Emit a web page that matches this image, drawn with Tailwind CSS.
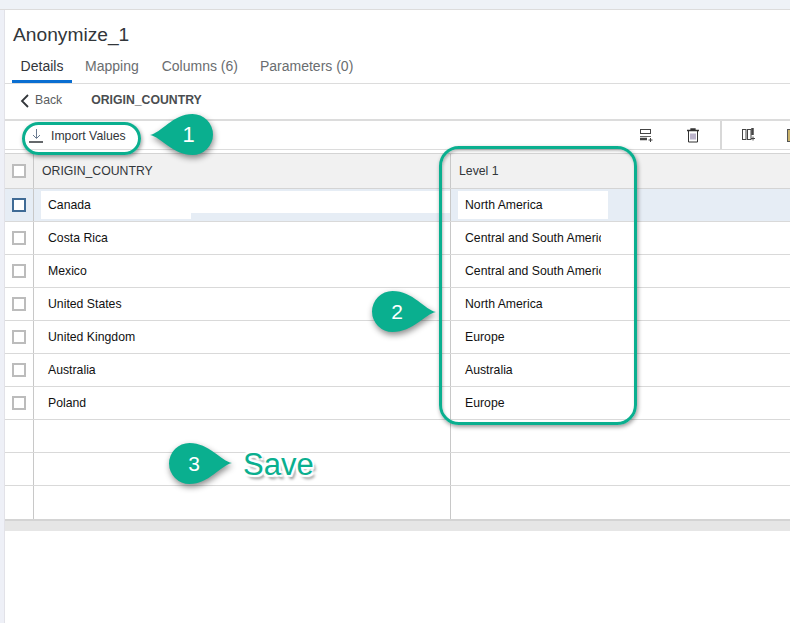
<!DOCTYPE html>
<html lang="en">
<head>
    <meta charset="UTF-8" />
    <title>Anonymize_1</title>
    <script src="https://cdn.jsdelivr.net/npm/@tailwindcss/browser@4"></script>
</head>
<body class="bg-white font-['Liberation_Sans',Arial,sans-serif] overflow-hidden">
<div class="relative w-[790px] h-[623px] overflow-hidden bg-white">

    <!-- Shell top bar -->
    <div class="h-[10px] bg-[#eef2f7] border-b border-[#dcdcdc]"></div>

    <div class="flex h-[613px]">
        <div class="w-[5px] shrink-0 bg-[#eef0f7] border-r border-[#e2e2e8]"></div>

        <div class="flex-1 min-w-0">
            <!-- Title and tabs -->
            <div class="h-[74px] border-b border-[#dcdcdc]">
                <h1 class="pl-2 pt-[13px] h-[44px] text-[19.2px] leading-[24px] text-[#32363a]">Anonymize_1</h1>
                <div class="flex pl-[7px] h-[29px] text-[14px] leading-[18px] text-[#6a6d70]">
                    <div class="w-[60px] pt-[3px] text-center text-[#32363a] border-b-[3px] border-[#0a6ed1] box-content h-[23px]">Details</div>
                    <div class="ml-[13px] pt-[3px]">Mapping</div>
                    <div class="ml-[23px] pt-[3px]">Columns (6)</div>
                    <div class="ml-[22px] pt-[3px]">Parameters (0)</div>
                </div>
            </div>

            <!-- Back row -->
            <div class="flex items-center h-[37px] pb-[2px] border-b-2 border-[#dcdcdc] text-[12.25px] text-[#32363a]">
                <svg class="ml-[15px] w-[9px] h-[14px]" viewBox="0 0 9 14" fill="none" stroke="#32363a" stroke-width="1.8"><path d="M8 1 2 7l6 6"/></svg>
                <span class="ml-[6px] text-[#5a5d60]">Back</span>
                <span class="ml-[29px] font-bold text-[#4a4d50]">ORIGIN_COUNTRY</span>
            </div>

            <!-- Toolbar -->
            <div class="relative flex items-center h-[29px] border-b border-[#dcdcdc] text-[12.25px] text-[#32363a]">
                <svg class="ml-[24px] mt-[1px] w-[15px] h-[14px]" viewBox="0 0 15 14" fill="none" stroke="#32363a"><path d="M7.500 0v9M4 6l3.500 3.500L11 6" stroke="#6a7a90"/><path d="M0 13h14" stroke-width="1.500"/></svg>
                <span class="ml-[7px] mt-[2px]">Import Values</span>
                <div class="ml-auto flex items-center h-full">
                    <svg class="w-[14px] h-[14px] mr-[33px]" viewBox="0 0 14 14" fill="none" stroke="#444"><rect x="1.500" y="1.500" width="10" height="4"/><path d="M1 8.500h11" stroke="#666"/><path d="M1 11h7" stroke-width="2.500"/><path d="M9.500 12h4M11.500 10v4"/></svg>
                    <svg class="w-[14px] h-[15px] mr-[20px]" viewBox="0 0 14 15" fill="none" stroke="#333"><path d="M1 2.500h12M5 2.500V1h4v1.500" stroke-width="1.300"/><path d="M2.500 3v11h9V3"/><path d="M5 5.500v6M7 5.500v6M9 5.500v6" stroke="#7a6a9a"/></svg>
                    <div class="w-[2px] h-full bg-[#d8d8d8] mr-[20px]"></div>
                    <svg class="w-[13px] h-[14px] mr-[32px]" viewBox="0 0 13 14" fill="none" stroke="#444"><rect x="0.500" y="1.500" width="3.500" height="10"/><rect x="5.500" y="1.500" width="3.500" height="10"/><path d="M10.500 0v7" stroke-width="2.500"/><path d="M9 10.500h4M11 8.500v4"/></svg>
                    <div class="w-[5px] h-[13px] mr-[-2px] bg-[#c9b26a] border border-[#555]"></div>
                </div>
            </div>

            <!-- Table -->
            <div class="mt-[3px] border-t border-[#d4d4d4] text-[12.25px] text-[#111]">
                <div class="grid grid-cols-[29px_417px_1fr] h-[35px] bg-[#f1f1f1] border-b border-[#d4d4d4] text-[#32363a] items-center">
                    <div class="flex items-center justify-center h-full border-r border-[#c8c8c8] pr-[1px]"><span class="block size-[14px] border-2 border-[#bcbcbc] bg-white"></span></div>
                    <div class="pl-2 h-full flex items-center border-r border-[#c8c8c8]">ORIGIN_COUNTRY</div>
                    <div class="pl-2">Level 1</div>
                </div>

                <!-- Selected row -->
                <div class="relative grid grid-cols-[29px_417px_1fr] h-[33px] bg-[#e6edf5] border-b border-[#d9d9d9] items-center">
                    <div class="flex items-center justify-center h-full border-r border-[#c8c8c8] pr-[1px]"><span class="block size-[14px] border-2 border-[#3f6b96] bg-white"></span></div>
                    <div class="relative h-full border-r border-[#c8c8c8]">
                        <div class="absolute left-[7px] top-[2px] w-[150px] h-[28px] bg-white pl-[7px] leading-[28px]">Canada</div>
                        <div class="absolute left-[157px] top-[2px] right-0 h-[22px] bg-white"></div>
                    </div>
                    <div class="pl-[7px] h-full pt-[2px]"><div class="w-[150px] h-[28px] bg-white pl-[7px] leading-[28px]">North America</div></div>
                </div>

                <div class="grid grid-cols-[29px_417px_1fr] h-[33px] border-b border-[#d9d9d9] items-center">
                    <div class="flex items-center justify-center h-full border-r border-[#c8c8c8] pr-[1px]"><span class="block size-[14px] border-2 border-[#bcbcbc]"></span></div>
                    <div class="pl-[14px] h-full flex items-center border-r border-[#c8c8c8]">Costa Rica</div>
                    <div class="pl-[14px]"><div class="w-[136px] overflow-hidden whitespace-nowrap">Central and South America</div></div>
                </div>
                <div class="grid grid-cols-[29px_417px_1fr] h-[33px] border-b border-[#d9d9d9] items-center">
                    <div class="flex items-center justify-center h-full border-r border-[#c8c8c8] pr-[1px]"><span class="block size-[14px] border-2 border-[#bcbcbc]"></span></div>
                    <div class="pl-[14px] h-full flex items-center border-r border-[#c8c8c8]">Mexico</div>
                    <div class="pl-[14px]"><div class="w-[136px] overflow-hidden whitespace-nowrap">Central and South America</div></div>
                </div>
                <div class="grid grid-cols-[29px_417px_1fr] h-[33px] border-b border-[#d9d9d9] items-center">
                    <div class="flex items-center justify-center h-full border-r border-[#c8c8c8] pr-[1px]"><span class="block size-[14px] border-2 border-[#bcbcbc]"></span></div>
                    <div class="pl-[14px] h-full flex items-center border-r border-[#c8c8c8]">United States</div>
                    <div class="pl-[14px]">North America</div>
                </div>
                <div class="grid grid-cols-[29px_417px_1fr] h-[33px] border-b border-[#d9d9d9] items-center">
                    <div class="flex items-center justify-center h-full border-r border-[#c8c8c8] pr-[1px]"><span class="block size-[14px] border-2 border-[#bcbcbc]"></span></div>
                    <div class="pl-[14px] h-full flex items-center border-r border-[#c8c8c8]">United Kingdom</div>
                    <div class="pl-[14px]">Europe</div>
                </div>
                <div class="grid grid-cols-[29px_417px_1fr] h-[33px] border-b border-[#d9d9d9] items-center">
                    <div class="flex items-center justify-center h-full border-r border-[#c8c8c8] pr-[1px]"><span class="block size-[14px] border-2 border-[#bcbcbc]"></span></div>
                    <div class="pl-[14px] h-full flex items-center border-r border-[#c8c8c8]">Australia</div>
                    <div class="pl-[14px]">Australia</div>
                </div>
                <div class="grid grid-cols-[29px_417px_1fr] h-[33px] border-b border-[#d9d9d9] items-center">
                    <div class="flex items-center justify-center h-full border-r border-[#c8c8c8] pr-[1px]"><span class="block size-[14px] border-2 border-[#bcbcbc]"></span></div>
                    <div class="pl-[14px] h-full flex items-center border-r border-[#c8c8c8]">Poland</div>
                    <div class="pl-[14px]">Europe</div>
                </div>

                <!-- Empty rows -->
                <div class="grid grid-cols-[29px_417px_1fr] h-[33px] border-b border-[#d9d9d9]">
                    <div class="border-r border-[#c8c8c8]"></div><div class="border-r border-[#c8c8c8]"></div><div></div>
                </div>
                <div class="grid grid-cols-[29px_417px_1fr] h-[33px] border-b border-[#d9d9d9]">
                    <div class="border-r border-[#c8c8c8]"></div><div class="border-r border-[#c8c8c8]"></div><div></div>
                </div>
                <div class="grid grid-cols-[29px_417px_1fr] h-[35px] border-b-2 border-[#d4d4d4]">
                    <div class="border-r border-[#c8c8c8]"></div><div class="border-r border-[#c8c8c8]"></div><div></div>
                </div>
                <div class="h-[10px] bg-[#e6e6e6]"></div>
            </div>
        </div>
    </div>

    <!-- Callouts on top of the screenshot -->
    <div class="absolute left-[22px] top-[122px] w-[119px] h-[33px] rounded-full border-[3px] border-[#0aaf8f] shadow-[1px_2px_4px_rgba(0,0,0,0.4)]"></div>
    <div class="absolute left-[439px] top-[146px] w-[198px] h-[279px] rounded-[20px] border-[3px] border-[#0aaf8f] shadow-[1px_2px_4px_rgba(0,0,0,0.4),inset_1px_2px_3px_rgba(0,0,0,0.25)]"></div>

    <svg class="absolute left-[150px] top-[114px] w-[64px] h-[42px] overflow-visible drop-shadow-[1px_3px_3px_rgba(0,0,0,0.45)]" viewBox="0 0 64 42"><path d="M0 21C11 19 23 0 42.500 0a20.500 20.500 0 0 1 0 41C23 41 11 23 0 21Z" fill="#0aaf8f"/></svg>
    <div class="absolute left-[168px] top-[120px] w-[41px] h-[30px] text-center text-[22px] leading-[30px] text-white">1</div>

    <svg class="absolute left-[372px] top-[291px] w-[65px] h-[42px] overflow-visible drop-shadow-[1px_3px_3px_rgba(0,0,0,0.45)]" viewBox="0 0 65 42"><path d="M64 21C53 19 41 0 20.500 0a20.500 20.500 0 0 0 0 41C41 41 53 23 64 21Z" fill="#0aaf8f"/></svg>
    <div class="absolute left-[373px] top-[297px] w-[48px] h-[30px] text-center text-[21px] leading-[30px] text-white">2</div>

    <svg class="absolute left-[169px] top-[443px] w-[64px] h-[42px] overflow-visible drop-shadow-[1px_3px_3px_rgba(0,0,0,0.45)]" viewBox="0 0 64 42"><path d="M63 20C52 18 40 0 20.500 0a20.500 20.500 0 0 0 0 41C40 41 52 22 63 20Z" fill="#0aaf8f"/></svg>
    <div class="absolute left-[170px] top-[449px] w-[48px] h-[30px] text-center text-[21px] leading-[30px] text-white">3</div>

    <div class="absolute left-[243px] top-[448px] text-[31px] leading-[34px] text-[#0aaf8f] [text-shadow:0_0_2px_#fff,2px_2px_1px_#fff,-2px_-2px_1px_#fff,2px_-2px_1px_#fff,-2px_2px_1px_#fff,3px_4px_3px_rgba(0,0,0,0.45)]">Save</div>
</div>
</body>
</html>
